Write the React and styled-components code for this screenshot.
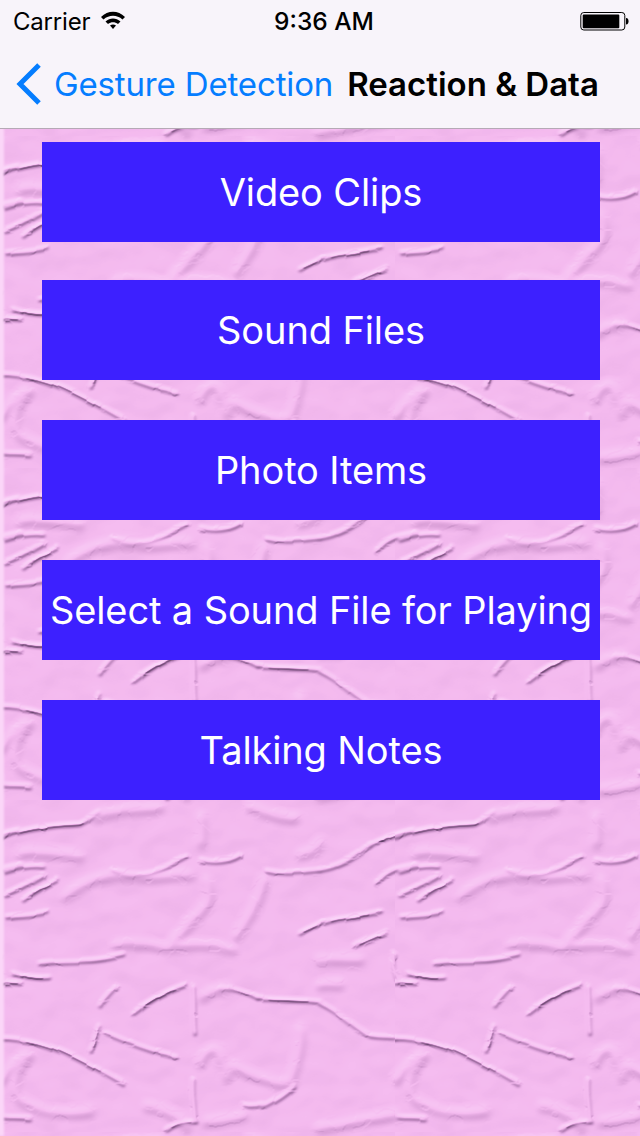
import React from "react";
import styled, { createGlobalStyle } from "styled-components";

const Global = createGlobalStyle`
  html, body { margin: 0; padding: 0; }
  body { width: 640px; height: 1136px; overflow: hidden; font-family: Inter, "Liberation Sans", sans-serif; }
`;
const Screen = styled.div`
  position: relative; width: 640px; height: 1136px; overflow: hidden; background: #f5bbf0;
  display: flex; flex-direction: column;
`;
const Texture = styled.svg`
  position: absolute; left: 0; top: 0; width: 640px; height: 1136px;
`;
const Header = styled.header`
  position: relative; height: 129px; box-sizing: border-box; background: #f8f4fa; border-bottom: 1px solid #b5a9b5;
  display: flex; flex-direction: column; flex: none;
`;
const StatusBar = styled.div`
  height: 42px; padding: 0 11px 0 13px; display: flex; align-items: center; position: relative; font-size: 24px; color: #000;
`;
const Carrier = styled.span` font-weight: 400; letter-spacing: -0.2px; `;
const Clock = styled.span`
  position: absolute; left: 8px; right: 0; text-align: center; font-weight: 500; font-size: 24.5px;
`;
const Nav = styled.nav`
  flex: 1; display: flex; align-items: center; padding: 0 0 2px 16px; font-size: 33px;
`;
const BackLabel = styled.span` color: #057dff; margin-left: 12px; letter-spacing: -0.15px; `;
const Title = styled.span` color: #000; font-weight: 600; margin-left: 14px; letter-spacing: 0; `;
const Menu = styled.main`
  position: relative; display: flex; flex-direction: column; gap: 40px; padding: 13px 40px 0 42px;
`;
const MenuButton = styled.button`
  height: 100px; width: 558px; border: 0; padding: 0; background: #3d20ff; color: #fff;
  font-family: inherit; font-size: 38px; font-weight: 400; white-space: nowrap; letter-spacing: -0.12px;
  &:first-child { margin-bottom: -2px; }
`;

// Creases of one texture tile, in units of a third of a pixel. They are drawn as a
// height map that a lighting filter turns into an embossed surface.
const strong = [
  "M0 112C80 85 170 75 240 72C270 60 280 45 300 35",
  "M70 300C100 275 130 260 170 240",
  "M400 640C450 600 510 570 555 555",
  "M0 715C80 715 150 735 220 770C280 800 340 830 370 850",
  "M270 750C285 720 290 700 300 680",
  "M500 990C520 975 540 965 590 965",
  "M770 595C830 600 900 600 960 605",
  "M900 400C925 385 945 380 960 370",
  "M0 548C30 545 40 548 60 550",
  "M40 520C70 530 100 540 145 535",
  "M960 370C1010 355 1080 350 1140 335",
  "M1060 440C1090 425 1120 415 1160 395",
  "M1110 135C1150 115 1190 100 1240 90",
];
const medium = [
  "M15 215C50 205 90 195 130 200",
  "M15 285C60 270 100 240 130 225",
  "M20 350C70 345 110 345 140 335",
  "M340 210C380 225 420 228 460 215C500 205 520 190 560 170",
  "M600 180C640 190 680 190 720 165",
  "M800 210C860 225 900 215 960 210",
  "M120 490C200 480 280 490 370 465",
  "M320 700C380 725 450 755 530 770",
  "M580 560C585 600 580 660 585 700",
  "M660 565C700 565 740 580 770 595",
  "M580 840C575 880 585 920 585 960",
  "M10 950C30 955 50 950 90 955",
  "M730 915C750 920 770 918 790 912",
  "M790 920C830 900 860 880 880 860",
  "M300 620C310 600 330 580 350 560",
  "M960 210C1020 200 1070 170 1110 135",
  "M960 610C1010 630 1060 680 1110 710C1140 715 1170 714 1185 715",
  "M1180 460C1175 490 1180 520 1200 545",
  "M1130 250C1150 215 1200 200 1250 195",
];
const soft = [
  "M60 160C120 150 180 160 240 170",
  "M605 50C610 80 605 110 605 130",
  "M620 240C640 300 610 330 590 350C560 380 540 400 520 425",
  "M750 20C800 40 850 60 885 55",
  "M900 165C930 160 950 150 960 130",
  "M350 435C420 425 460 435 500 445",
  "M85 770C50 810 30 870 60 900C110 935 200 950 270 935",
  "M700 800C760 830 830 860 870 850C890 800 910 720 900 690",
  "M620 965C660 960 700 960 730 945",
  "M660 780C680 800 680 820 680 830",
  "M710 410C740 360 770 330 790 240",
  "M960 480C1000 475 1040 480 1080 480",
  "M960 555C980 550 1010 555 1020 555",
  "M960 985C1010 975 1090 960 1185 945",
  "M1190 840C1220 800 1240 780 1260 765",
  "M290 50C340 30 420 30 480 25",
  "M200 290C260 240 320 220 400 225C450 240 500 225 570 225",
  "M610 590C630 570 650 565 680 570",
  "M520 440C580 430 640 430 700 450",
  "M600 790C620 740 650 740 665 770",
  "M440 920C480 925 520 940 560 980",
];

const TILE_W = 395;
const TILE_H = 332;
const ORIGIN_Y = 136;
const wraps = [[0, 0], [-1185, 0], [0, -996], [-1185, -996]];

function Layer({ paths, taper, ...rest }) {
  return (
    <g {...rest}>
      {wraps.map(([x, y]) => (
        <g key={`${x}${y}`} transform={`translate(${x} ${y})`}>
          {paths.map((d) =>
            taper ? (
              <path key={d} d={d} pathLength="100" strokeDasharray="60 100" strokeDashoffset="-20" />
            ) : (
              <path key={d} d={d} />
            )
          )}
        </g>
      ))}
    </g>
  );
}

function Wrinkles() {
  const region = { filterUnits: "userSpaceOnUse", x: -60, y: -60, width: 1305, height: 1116 };
  return (
    <Texture viewBox="0 0 640 1136">
      <defs>
        <filter id="fine" {...region}><feGaussianBlur stdDeviation="2" /></filter>
        <filter id="mid" {...region}><feGaussianBlur stdDeviation="4.500" /></filter>
        <filter id="wide" {...region}><feGaussianBlur stdDeviation="9" /></filter>
        <filter id="edge" x="-100%" y="0" width="300%" height="100%"><feGaussianBlur stdDeviation="1" /></filter>
        <filter id="emboss" {...region} colorInterpolationFilters="sRGB">
          <feTurbulence type="fractalNoise" baseFrequency="0.012 0.016" numOctaves="2" seed="4" result="noise" />
          <feDisplacementMap in="SourceGraphic" in2="noise" scale="12" xChannelSelector="R" yChannelSelector="G" result="bent" />
          <feColorMatrix in="noise" type="matrix" values="0 0 0 0 0  0 0 0 0 0  0 0 0 0 0  0.45 0 0 0 -0.1" result="swell" />
          <feGaussianBlur in="swell" stdDeviation="10" result="swellSoft" />
          <feMerge result="height">
            <feMergeNode in="swellSoft" />
            <feMergeNode in="bent" />
          </feMerge>
          <feDiffuseLighting in="height" surfaceScale="3.600" diffuseConstant="1" lightingColor="#ffffff" result="lit">
            <feDistantLight azimuth="255" elevation="45" />
          </feDiffuseLighting>
          <feComponentTransfer in="lit">
            <feFuncR type="table" tableValues="0.26 0.40 0.56 0.72 0.86 0.96 0.975 0.985" />
            <feFuncG type="table" tableValues="0.14 0.26 0.38 0.51 0.63 0.733 0.79 0.85" />
            <feFuncB type="table" tableValues="0.28 0.42 0.57 0.72 0.85 0.94 0.96 0.98" />
          </feComponentTransfer>
        </filter>
        <pattern id="tile" width={TILE_W} height={TILE_H} y={ORIGIN_Y} patternUnits="userSpaceOnUse">
          <g transform="scale(0.33333)" filter="url(#emboss)" fill="none" stroke="#000" strokeLinecap="round">
            <Layer paths={soft} strokeWidth="22" strokeOpacity="0.75" filter="url(#wide)" />
            <Layer paths={medium} strokeWidth="11" strokeOpacity="0.75" filter="url(#mid)" />
            <Layer paths={strong} strokeWidth="10" strokeOpacity="0.8" filter="url(#mid)" />
            <Layer paths={strong} taper strokeWidth="6" strokeOpacity="0.6" filter="url(#fine)" />
          </g>
        </pattern>
      </defs>
      <rect width="640" height="1136" fill="url(#tile)" />
      <rect x="-2" y="0" width="6" height="1136" fill="#fbd6f8" filter="url(#edge)" />
    </Texture>
  );
}

function WifiIcon() {
  return (
    <svg width="26" height="20" viewBox="0 0 26 20" style={{ marginLeft: 10, marginTop: -3 }}>
      <path d="M1 7C8 0 18 0 25 7L22.500 9.500C17 4.500 9 4.500 3.500 9.500Z" />
      <path d="M5.500 11.500C10 7.500 16 7.500 20.500 11.500L18 14C15 11.500 11 11.500 8 14Z" />
      <path d="M10 15.500C12 14 14 14 16 15.500L13 19Z" />
    </svg>
  );
}
function BatteryIcon() {
  return (
    <svg width="49" height="20" viewBox="0 0 49 20" style={{ marginLeft: "auto" }}>
      <rect x="0.800" y="1.500" width="44" height="17.500" rx="3" fill="none" stroke="#000" />
      <rect x="2.700" y="3.400" width="36.600" height="13.800" rx="1" />
      <path d="M46 7C48 7 48.500 8.500 48.500 10.200C48.500 12 48 13.500 46 13.500Z" />
    </svg>
  );
}
function BackChevron() {
  return (
    <svg width="26" height="44" viewBox="0 0 26 44">
      <path d="M23 3L4 22L23 41" fill="none" stroke="#057dff" strokeWidth="5" />
    </svg>
  );
}

const items = ["Video Clips", "Sound Files", "Photo Items", "Select a Sound File for Playing", "Talking Notes"];

export default function App() {
  return (
    <Screen>
      <Global />
      <Wrinkles />
      <Header>
        <StatusBar>
          <Carrier>Carrier</Carrier>
          <WifiIcon />
          <Clock>9:36 AM</Clock>
          <BatteryIcon />
        </StatusBar>
        <Nav>
          <BackChevron />
          <BackLabel>Gesture Detection</BackLabel>
          <Title>Reaction &amp; Data</Title>
        </Nav>
      </Header>
      <Menu>
        {items.map((t) => <MenuButton key={t}>{t}</MenuButton>)}
      </Menu>
    </Screen>
  );
}
